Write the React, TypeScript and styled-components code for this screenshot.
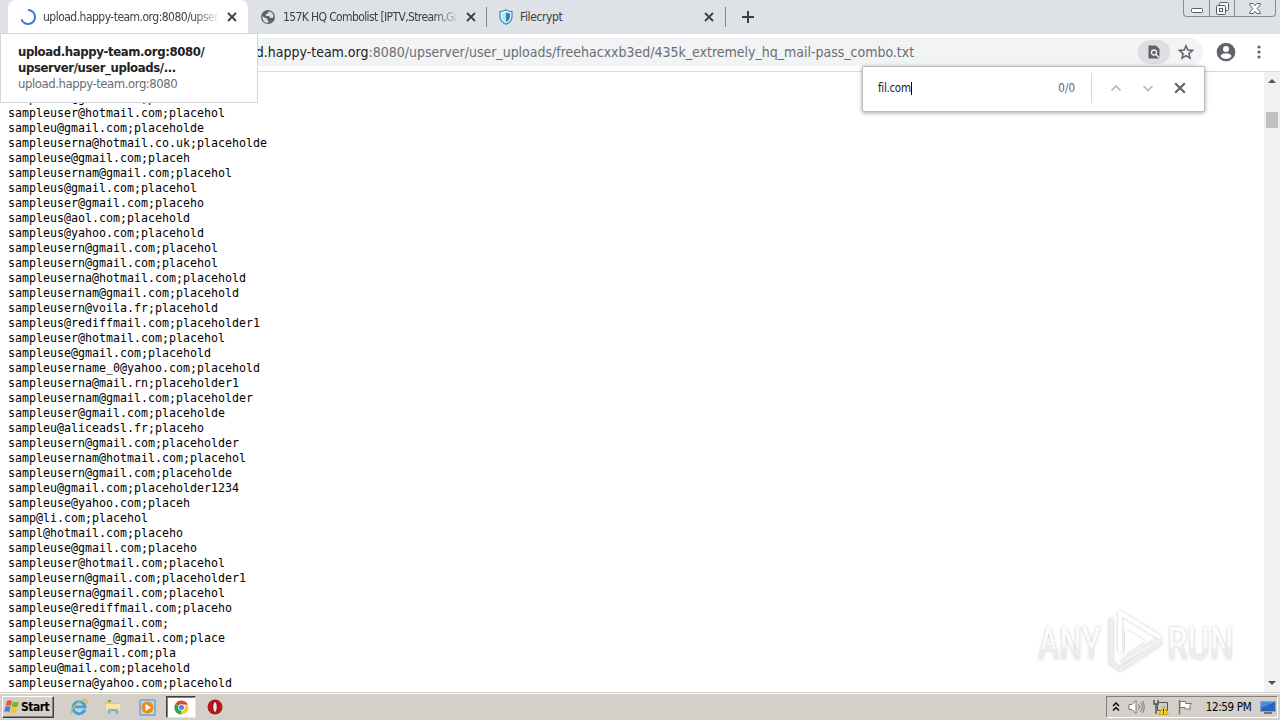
import React from "react";
import styled, { createGlobalStyle } from "styled-components";

const GlobalStyle = createGlobalStyle`
  * {
    box-sizing: border-box;
  }
  body {
    margin: 0;
    overflow: hidden;
    background: #fff;
    font-family: "DejaVu Sans Condensed", "DejaVu Sans", "Liberation Sans", sans-serif;
    font-stretch: condensed;
  }
  svg {
    display: block;
    flex: none;
  }
`;

const Screen = styled.div`
  position: relative;
  width: 1280px;
  height: 720px;
  display: grid;
  grid-template-rows: 34px 38px 620px 28px;
  overflow: hidden;
`;

const TabStrip = styled.div`
  display: flex;
  padding-left: 8px;
  background: #dee1e6;
`;

const Tab = styled.div<{ $active?: boolean; $width: number }>`
  display: flex;
  align-items: center;
  width: ${(p) => p.$width}px;
  padding: 0 10px 0 12px;
  border-radius: 8px 8px 0 0;
  background: ${(p) => (p.$active ? "#fff" : "transparent")};
`;

const TabTitle = styled.span<{ $fade?: boolean; $spacing: number }>`
  width: 174px;
  margin: 0 10px 0 7px;
  overflow: hidden;
  white-space: nowrap;
  font-size: 12px;
  line-height: 16px;
  letter-spacing: ${(p) => p.$spacing}px;
  color: #3c4043;
  ${(p) => p.$fade && "mask-image: linear-gradient(to right, #000 150px, transparent 178px);"}
`;

const TabDivider = styled.i`
  width: 1px;
  height: 20px;
  margin-top: 7px;
  background: #84878c;
`;

const NewTab = styled.div`
  padding: 11px 0 0 16px;
`;

const WindowButtons = styled.div`
  display: flex;
  width: 93px;
  height: 17px;
  margin: 0 4px 0 auto;
  border: 1px solid #888b91;
  border-top: 0;
  border-radius: 0 0 4px 4px;
`;

const WindowButton = styled.div<{ $width: number }>`
  display: flex;
  align-items: center;
  justify-content: center;
  width: ${(p) => p.$width}px;
  & + & {
    border-left: 1px solid #888b91;
  }
`;

const Toolbar = styled.div`
  display: flex;
  align-items: center;
  padding: 0 15px 2px 80px;
  border-bottom: 1px solid #d9dadb;
  background: #fff;
`;

const Omnibox = styled.div`
  display: flex;
  align-items: center;
  width: 1123px;
  height: 28px;
  padding: 0 9px 0 141px;
  border-radius: 14px;
  background: #f1f3f4;
`;

const Url = styled.div`
  flex: 1;
  white-space: nowrap;
  font-size: 14px;
  letter-spacing: -0.01px;
  color: #6a6e73;
  b {
    font-weight: 400;
    color: #202124;
  }
`;

const FindChip = styled.div`
  display: flex;
  align-items: center;
  justify-content: center;
  width: 32px;
  height: 24px;
  margin-right: 8px;
  border-radius: 12px;
  background: #dcdee0;
`;

const ToolbarIcons = styled.div`
  display: flex;
  align-items: center;
  justify-content: space-between;
  width: 49px;
  margin-left: 13px;
`;

const Viewport = styled.div`
  display: flex;
  overflow: hidden;
  background: #fff;
`;

const Listing = styled.pre`
  flex: 1;
  margin: 0;
  padding: 19px 0 0 8px;
  font-family: "DejaVu Sans Mono", "Liberation Mono", monospace;
  font-size: 11.63px;
  line-height: 15px;
  color: #000;
`;

const Scrollbar = styled.div`
  display: flex;
  flex-direction: column;
  align-items: center;
  justify-content: space-between;
  width: 16px;
  padding: 7px 0;
  background: #f1f1f1;
`;

const Thumb = styled.i`
  width: 12px;
  height: 16px;
  margin: 29px 0 auto;
  background: #c1c1c1;
`;

const HoverCard = styled.div`
  position: absolute;
  left: 0;
  top: 33px;
  width: 258px;
  height: 70px;
  padding: 10px 17px;
  border: 1px solid #d3d5d8;
  background: #fff;
  color: #202124;
  font-size: 13px;
  line-height: 16px;
  white-space: nowrap;
`;

const CardTitle = styled.div`
  font-weight: 700;
  letter-spacing: -0.38px;
`;

const CardHost = styled.div`
  font-size: 13px;
  letter-spacing: -0.44px;
  color: #6a6e73;
`;

const FindBar = styled.div`
  position: absolute;
  left: 862px;
  top: 66px;
  width: 343px;
  height: 46px;
  display: flex;
  align-items: center;
  padding: 0 18px 2px 15px;
  border: 1px solid #b9bbbd;
  border-radius: 2px;
  background: #fff;
  box-shadow: 0 1px 4px rgba(0, 0, 0, 0.35);
  font-size: 11.5px;
  letter-spacing: -0.3px;
  color: #202124;
`;

const FindInput = styled.div`
  display: flex;
  align-items: center;
  flex: 1;
`;

const Caret = styled.i`
  width: 1px;
  height: 13px;
  background: #000;
`;

const FindCount = styled.span`
  letter-spacing: 0;
  color: #5f6368;
`;

const FindDivider = styled.i`
  width: 1px;
  height: 30px;
  margin: 0 18px 0 16px;
  background: #d5d7da;
`;

const FindActions = styled.div`
  display: flex;
  gap: 20px;
`;

const Watermark = styled.div`
  position: absolute;
  left: 1034px;
  top: 606px;
`;

const Taskbar = styled.div`
  display: flex;
  align-items: center;
  padding: 2px 2px 1px 2px;
  background: #d4cfc8;
  border-top: 1px solid #d4d0c8;
  box-shadow: inset 0 1px #fff;
`;

const StartButton = styled.div`
  display: flex;
  align-items: center;
  gap: 1px;
  width: 52px;
  height: 22px;
  padding-left: 1px;
  border: 1px solid;
  border-color: #fff #404040 #404040 #fff;
  box-shadow: inset -1px -1px #808080;
  font-size: 12px;
  font-weight: 700;
  letter-spacing: -0.5px;
  color: #000;
`;

const TaskItem = styled.div<{ $pressed?: boolean }>`
  display: flex;
  align-items: center;
  justify-content: center;
  width: 30px;
  height: 22px;
  margin-right: 4px;
  border: 1px solid transparent;
  ${(p) =>
    p.$pressed &&
    "background: #fff; border-color: #404040 #e8e6e2 #e8e6e2 #404040; box-shadow: inset 1px 1px #808080;"}
`;

const TaskItems = styled.div`
  display: flex;
  margin-left: 10px;
`;

const Tray = styled.div`
  display: flex;
  align-items: center;
  width: 172px;
  height: 22px;
  margin-left: auto;
  padding: 0 1px 0 5px;
  border: 1px solid;
  border-color: #808080 #fff #fff #808080;
  color: #000;
`;

const TrayIcons = styled.div`
  display: flex;
  align-items: center;
  gap: 8px;
`;

const Clock = styled.span`
  flex: 1;
  text-align: center;
  padding-left: 3px;
  font-size: 11.5px;
  letter-spacing: -0.35px;
  white-space: nowrap;
`;

// [name length, domain, secret length]
const entries: [number, string, number][] = [
  [9, "gmail.com", 8],
  [10, "hotmail.com", 8],
  [7, "gmail.com", 10],
  [12, "hotmail.co.uk", 10],
  [9, "gmail.com", 6],
  [13, "gmail.com", 8],
  [8, "gmail.com", 8],
  [10, "gmail.com", 7],
  [8, "aol.com", 9],
  [8, "yahoo.com", 9],
  [11, "gmail.com", 8],
  [11, "gmail.com", 8],
  [12, "hotmail.com", 9],
  [13, "gmail.com", 9],
  [11, "voila.fr", 9],
  [8, "rediffmail.com", 12],
  [10, "hotmail.com", 8],
  [9, "gmail.com", 9],
  [16, "yahoo.com", 9],
  [12, "mail.rn", 12],
  [13, "gmail.com", 11],
  [10, "gmail.com", 10],
  [7, "aliceadsl.fr", 7],
  [11, "gmail.com", 11],
  [13, "hotmail.com", 8],
  [11, "gmail.com", 10],
  [7, "gmail.com", 15],
  [9, "yahoo.com", 6],
  [4, "li.com", 8],
  [5, "hotmail.com", 7],
  [9, "gmail.com", 7],
  [10, "hotmail.com", 8],
  [11, "gmail.com", 12],
  [12, "gmail.com", 8],
  [9, "rediffmail.com", 7],
  [12, "gmail.com", 0],
  [15, "gmail.com", 5],
  [10, "gmail.com", 3],
  [7, "mail.com", 9],
  [12, "yahoo.com", 9],
];

// placeholder accounts only, no real names or passwords
const listing = entries
  .map(([name, domain, secret]) => {
    return `${"sampleusername_01".slice(0, name)}@${domain};${"placeholder1234".slice(0, secret)}`;
  })
  .join("\n");

const CloseIcon = ({ size = 10, color = "#3c4043" }: { size?: number; color?: string }) => (
  <svg width={size} height={size} viewBox="0 0 10 10">
    <path d="M1 1l8 8M9 1l-8 8" stroke={color} strokeWidth="1.8" />
  </svg>
);

const Spinner = () => (
  <svg width="16" height="16" viewBox="0 0 16 16">
    <path d="M8 1a7 7 0 1 1-6.600 9.200" fill="none" stroke="#3b78d8" strokeWidth="2" />
  </svg>
);

const GlobeIcon = () => (
  <svg width="16" height="16" viewBox="0 0 16 16">
    <circle cx="8" cy="8" r="7" fill="#5f6368" />
    <path d="M2.500 7l3 2.300 1.700.2v1.700l1.500.9-1 1.900C4.500 13.800 2.200 11 2.500 7zM8.500 2.600l-.7 2-2 .7.200 1.700h3l1.200 1.700 2 .3 1.300-1C13.600 5 11.500 2.600 8.500 2.600z" fill="#dee1e6" />
  </svg>
);

const ShieldIcon = () => (
  <svg width="14" height="16" viewBox="0 0 14 16">
    <path d="M7 .8C5 2.300 3 2.500 1 2.600v5C1 11 3.500 13.700 7 15.200c3.500-1.500 6-4.200 6-7.600v-5C11 2.500 9 2.300 7 .8z" fill="#e8f6fb" stroke="#3d91b8" strokeWidth="1.300" />
    <path d="M7 3.200v9.700c2.500-1.200 4-3 4-5.500V4.300C9.500 4.300 8.200 4 7 3.200z" fill="#2487b5" />
    <path d="M7 3.200v9.700C4.500 11.700 3 9.900 3 7.400V4.300c1.500 0 2.800-.3 4-1.100z" fill="#b9e2f2" />
  </svg>
);

const AnyRunMark = () => (
  <svg width="202" height="70" viewBox="0 0 202 70">
    <defs>
      <filter id="markShadow" x="-10%" y="-10%" width="120%" height="120%">
        <feDropShadow dx="0" dy="0" stdDeviation="1.400" floodColor="#888" floodOpacity="0.500" />
      </filter>
      <linearGradient id="markFill" x1="0" y1="0" x2="0" y2="1">
        <stop offset="0" stopColor="#fff" />
        <stop offset="0.550" stopColor="#fafafa" />
        <stop offset="0.600" stopColor="#ededed" />
        <stop offset="1" stopColor="#eaeaea" />
      </linearGradient>
    </defs>
    <g filter="url(#markShadow)">
      <text x="4" y="53" textLength="63" lengthAdjust="spacingAndGlyphs" fontFamily="Roboto, sans-serif" fontSize="44" fontWeight="400" fill="url(#markFill)">ANY</text>
      <text x="133" y="53" textLength="67" lengthAdjust="spacingAndGlyphs" fontFamily="Roboto, sans-serif" fontSize="44" fontWeight="400" fill="url(#markFill)">RUN</text>
      <path d="M77 12.500v44l9 7 41-27" fill="none" stroke="#ededed" strokeWidth="4" strokeLinejoin="round" />
      <path d="M86 46V7l41 25" fill="none" stroke="#fff" strokeWidth="4" strokeLinejoin="round" />
      <path d="M88 56l37-22" fill="none" stroke="#f2f2f2" strokeWidth="4" />
      <path d="M91 23l20 12-20 13z" fill="#fff" />
    </g>
  </svg>
);

const WindowsFlag = () => (
  <svg width="16" height="16" viewBox="0 0 16 16">
    <path d="M3 2c2-1 3.500-1 5 0L6.800 7c-1.500-1-3-1-5 0z" fill="#e8562a" />
    <path d="M9 2.500c2 1 3.500 1 6 0L13.700 7.500c-2 1-4 1-6 0z" fill="#78b832" />
    <path d="M1.500 8c2-1 3.500-1 5 0l-1.300 5c-1.500-1-3-1-5 0z" fill="#3e7fd0" />
    <path d="M7.500 8.500c2 1 4 1 6 0l-1.300 5c-2.500 1-4 1-6 0z" fill="#f8c32c" />
  </svg>
);

const ExplorerE = () => (
  <svg width="18" height="18" viewBox="0 0 18 18">
    <path d="M14.800 11.500A6 6 0 1 1 15 8.800H5" fill="none" stroke="#38a5df" strokeWidth="2.800" />
    <path d="M2 15.500C-.5 13 6 4 13 2c4-1 4.500 1 3 4" fill="none" stroke="#e0b43a" strokeWidth="1.300" />
  </svg>
);

const FolderIcon = () => (
  <svg width="18" height="18" viewBox="0 0 18 18">
    <path d="M1 3h6l1 2h8v9H1z" fill="#e9c964" />
    <path d="M4 2h3v2H4z" fill="#59b55d" />
    <path d="M2 6h14v7H2z" fill="#f8e7a0" />
    <path d="M4 16v-5h10v5h-2.500v-3h-5v3z" fill="#70b9de" />
  </svg>
);

const MediaIcon = () => (
  <svg width="17" height="17" viewBox="0 0 17 17">
    <path d="M1 1h15v15H1z" fill="#b9d9ee" stroke="#4e8bbb" />
    <circle cx="8.500" cy="8.500" r="6" fill="#f28a17" />
    <path d="M6.500 5v7l5.500-3.500z" fill="#fff" />
  </svg>
);

const ChromeIcon = () => (
  <svg width="15" height="15" viewBox="0 0 16 16">
    <path d="M8 8L1.500 4A7.500 7.500 0 0 1 14.800 5H8z" fill="#dd4938" />
    <path d="M8 8l6.800-3A7.500 7.500 0 0 1 7.500 15.500z" fill="#f6c92e" />
    <path d="M8 8l-.5 7.500A7.500 7.500 0 0 1 1.500 4z" fill="#31a252" />
    <circle cx="8" cy="8" r="3.500" fill="#fff" />
    <circle cx="8" cy="8" r="2.700" fill="#4a83e6" />
  </svg>
);

const OperaIcon = () => (
  <svg width="16" height="16" viewBox="0 0 16 16">
    <circle cx="8" cy="8" r="7.500" fill="#b9161b" />
    <ellipse cx="8" cy="8" rx="2.300" ry="5.500" fill="#f5e3e1" stroke="#750b0e" />
  </svg>
);

const App = () => {
  return (
    <>
      <GlobalStyle />
      <Screen>
        <TabStrip>
          <Tab $active $width={240}>
            <Spinner />
            <TabTitle $fade $spacing={-0.52}>upload.happy-team.org:8080/upser</TabTitle>
            <CloseIcon />
          </Tab>
          <Tab $width={238}>
            <GlobeIcon />
            <TabTitle $fade $spacing={-0.62}>157K HQ Combolist [IPTV,Stream,Ga</TabTitle>
            <CloseIcon />
          </Tab>
          <TabDivider />
          <Tab $width={238}>
            <ShieldIcon />
            <TabTitle $spacing={-0.4}>Filecrypt</TabTitle>
            <CloseIcon />
          </Tab>
          <TabDivider />
          <NewTab>
            <svg width="12" height="12" viewBox="0 0 12 12">
              <path d="M6 0v12M0 6h12" stroke="#3c4043" strokeWidth="2" />
            </svg>
          </NewTab>
          <WindowButtons>
            <WindowButton $width={25}>
              <svg width="12" height="12" viewBox="0 0 12 12">
                <rect x=".5" y="6.500" width="11" height="4" rx="1" fill="#fff" stroke="#5b5e66" />
              </svg>
            </WindowButton>
            <WindowButton $width={25}>
              <svg width="13" height="13" viewBox="0 0 13 13" fill="#f7f7f8" stroke="#5b5e66">
                <rect x="3.500" y=".5" width="9" height="8" rx="1" />
                <rect x=".5" y="3.500" width="9" height="9" rx="1" />
                <rect x="3.500" y="6.500" width="3" height="3" />
              </svg>
            </WindowButton>
            <WindowButton $width={41}>
              <svg width="12" height="11" viewBox="0 0 12 11">
                <path d="M.7.500h3.500L6 2.700 7.800.5h3.500v1.200L8.200 5.500l3.100 3.800v1.200H7.800L6 8.300l-1.800 2.200H.7V9.300l3.100-3.800L.7 1.700z" fill="#fff" stroke="#5b5e66" />
              </svg>
            </WindowButton>
          </WindowButtons>
        </TabStrip>

        <Toolbar>
          <Omnibox>
            <Url>
              <b>upload.happy-team.org</b>:8080/upserver/user_uploads/freehacxxb3ed/435k_extremely_hq_mail-pass_combo.txt
            </Url>
            <FindChip>
              <svg width="12" height="14" viewBox="0 0 12 14">
                <path d="M.5.500H8L11.500 4v9.500H.5z" fill="#5f6368" />
                <circle cx="6" cy="7.500" r="2.500" fill="none" stroke="#f1f3f4" strokeWidth="1.300" />
                <path d="M7.800 9.300l3.700 3.700" stroke="#f1f3f4" strokeWidth="1.300" />
              </svg>
            </FindChip>
            <svg width="16" height="16" viewBox="0 0 16 16">
              <path d="M8 1.800l1.800 4.300 4.700.4-3.600 3.100 1.100 4.600L8 11.700l-4 2.500 1.100-4.600-3.600-3.100 4.700-.4z" fill="none" stroke="#5f6368" strokeWidth="1.500" />
            </svg>
          </Omnibox>
          <ToolbarIcons>
            <svg width="20" height="20" viewBox="0 0 20 20">
              <circle cx="10" cy="10" r="9.300" fill="#5f6368" />
              <circle cx="10" cy="7" r="3" fill="#fff" />
              <path d="M4.300 14c1.200-2 3.700-2.700 5.700-2.700s4.500.7 5.700 2.700a7 7 0 0 1-11.400 0z" fill="#fff" />
            </svg>
            <svg width="10" height="14" viewBox="0 0 10 14" fill="#5f6368">
              <circle cx="4" cy="2" r="1.600" />
              <circle cx="4" cy="7" r="1.600" />
              <circle cx="4" cy="12" r="1.600" />
            </svg>
          </ToolbarIcons>
        </Toolbar>

        <Viewport>
          <Listing>{listing}</Listing>
          <Scrollbar>
            <svg width="8" height="4" viewBox="0 0 8 4">
              <path d="M0 4l4-4 4 4z" fill="#505050" />
            </svg>
            <Thumb />
            <svg width="8" height="4" viewBox="0 0 8 4">
              <path d="M0 0l4 4 4-4z" fill="#505050" />
            </svg>
          </Scrollbar>
        </Viewport>

        <Taskbar>
          <StartButton>
            <WindowsFlag />
            Start
          </StartButton>
          <TaskItems>
            <TaskItem>
              <ExplorerE />
            </TaskItem>
            <TaskItem>
              <FolderIcon />
            </TaskItem>
            <TaskItem>
              <MediaIcon />
            </TaskItem>
            <TaskItem $pressed>
              <ChromeIcon />
            </TaskItem>
            <TaskItem>
              <OperaIcon />
            </TaskItem>
          </TaskItems>
          <Tray>
            <TrayIcons>
              <svg width="8" height="10" viewBox="0 0 8 10" fill="none" stroke="#000" strokeWidth="1.400">
                <path d="M1 4l3-3 3 3M1 8.500l3-3 3 3" />
              </svg>
              <svg width="17" height="16" viewBox="0 0 17 16" fill="none" stroke="#777">
                <path d="M1 5.500h3l4-4v13l-4-4H1z" fill="#fff" />
                <path d="M10.500 5.500q2 2.500 0 5M12.500 3.500q3.500 4.500 0 9M14.500 2q3.500 6 0 12" />
              </svg>
              <svg width="16" height="16" viewBox="0 0 16 16">
                <path d="M4.500 3.500h10v8h-10z" fill="#ccc" stroke="#555" />
                <path d="M1 1v4h4V1M3 5v10" fill="none" stroke="#555" strokeWidth="1.500" />
                <path d="M10.500 7l5 8.500h-10z" fill="#f8cf20" stroke="#c39610" strokeWidth=".7" />
                <path d="M10.500 10v2.500M10.500 13.300v1.200" stroke="#222" />
              </svg>
              <svg width="17" height="16" viewBox="0 0 17 16">
                <path d="M2.500 1v14.500" stroke="#777" strokeWidth="1.500" />
                <path d="M3 2.500h5.500v2h6l-2 3 1 2.500H8V8.500H3z" fill="#fff" stroke="#777" />
              </svg>
            </TrayIcons>
            <Clock>12:59 PM</Clock>
            <svg width="16" height="14" viewBox="0 0 16 14">
              <path d="M.5 1.500h15v10H.5z" fill="#2865b8" stroke="#7fa7d8" />
              <path d="M1 2h14L1 8z" fill="#4a8de0" />
              <path d="M4 13h8" stroke="#555" strokeWidth="1.500" />
            </svg>
          </Tray>
        </Taskbar>

        <HoverCard>
          <CardTitle>upload.happy-team.org:8080/</CardTitle>
          <CardTitle>upserver/user_uploads/...</CardTitle>
          <CardHost>upload.happy-team.org:8080</CardHost>
        </HoverCard>
        <FindBar>
          <FindInput>
            fil.com
            <Caret />
          </FindInput>
          <FindCount>0/0</FindCount>
          <FindDivider />
          <FindActions>
            <svg width="12" height="12" viewBox="0 0 12 12">
              <path d="M1.500 8.500L6 4l4.500 4.500" fill="none" stroke="#b5b7ba" strokeWidth="1.700" />
            </svg>
            <svg width="12" height="12" viewBox="0 0 12 12">
              <path d="M1.500 4L6 8.500 10.500 4" fill="none" stroke="#b5b7ba" strokeWidth="1.700" />
            </svg>
            <CloseIcon size={12} color="#5f6368" />
          </FindActions>
        </FindBar>
        <Watermark>
          <AnyRunMark />
        </Watermark>
      </Screen>
    </>
  );
};

export default App;
